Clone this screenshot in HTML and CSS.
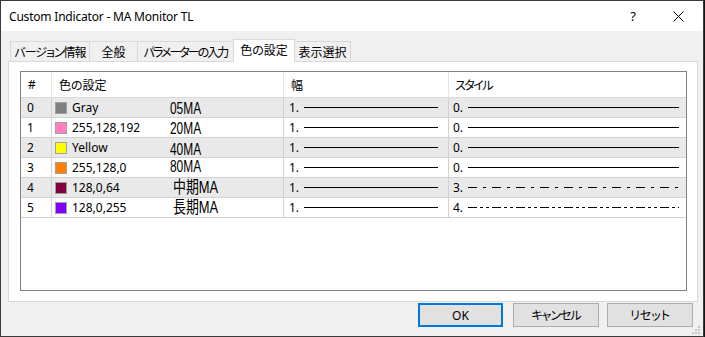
FILE: index.html
```html
<!DOCTYPE html>
<html lang="ja">
<head>
    <meta charset="UTF-8">
    <title>Custom Indicator - MA Monitor TL</title>
    <link rel="stylesheet" href="styles.css">
</head>
<body>
    <div class="window">
        <div class="titlebar">
            <span class="title">Custom Indicator - MA Monitor TL</span>
            <span class="help">?</span>
            <svg class="close" viewBox="0 0 11 11">
                <path d="M0.5 0.5 L10.5 10.5 M10.5 0.5 L0.5 10.5" stroke="#000" stroke-width="1" fill="none"/>
            </svg>
        </div>

        <div class="client">
            <div class="tabs">
                <div class="tab t1">バージョン情報</div>
                <div class="tab t2">全般</div>
                <div class="tab t3">パラメーターの入力</div>
                <div class="tab t4 active">色の設定</div>
                <div class="tab t5">表示選択</div>
            </div>

            <div class="panel">
                <div class="list">
                    <div class="row head">
                        <div class="cell num">#</div>
                        <div class="cell color">色の設定</div>
                        <div class="cell width">幅</div>
                        <div class="cell style"><span class="kana">スタイル</span></div>
                    </div>

                    <div class="row alt">
                        <div class="cell num">0</div>
                        <div class="cell color"><span class="swatch gray"></span>Gray<span class="tag">05MA</span></div>
                        <div class="cell width">1.<span class="line"></span></div>
                        <div class="cell style">0.<span class="line"></span></div>
                    </div>
                    <div class="row">
                        <div class="cell num">1</div>
                        <div class="cell color"><span class="swatch pink"></span>255,128,192<span class="tag">20MA</span></div>
                        <div class="cell width">1.<span class="line"></span></div>
                        <div class="cell style">0.<span class="line"></span></div>
                    </div>
                    <div class="row alt">
                        <div class="cell num">2</div>
                        <div class="cell color"><span class="swatch yellow"></span>Yellow<span class="tag low">40MA</span></div>
                        <div class="cell width">1.<span class="line"></span></div>
                        <div class="cell style">0.<span class="line"></span></div>
                    </div>
                    <div class="row">
                        <div class="cell num">3</div>
                        <div class="cell color"><span class="swatch orange"></span>255,128,0<span class="tag high">80MA</span></div>
                        <div class="cell width">1.<span class="line"></span></div>
                        <div class="cell style">0.<span class="line"></span></div>
                    </div>
                    <div class="row alt">
                        <div class="cell num">4</div>
                        <div class="cell color"><span class="swatch maroon"></span>128,0,64<span class="tag kanji">中期MA</span></div>
                        <div class="cell width">1.<span class="line"></span></div>
                        <div class="cell style">3.<span class="line dashdot"></span></div>
                    </div>
                    <div class="row">
                        <div class="cell num">5</div>
                        <div class="cell color"><span class="swatch violet"></span>128,0,255<span class="tag kanji">長期MA</span></div>
                        <div class="cell width">1.<span class="line"></span></div>
                        <div class="cell style">4.<span class="line dashdotdot"></span></div>
                    </div>
                </div>
            </div>

            <div class="buttons">
                <button class="btn ok">OK</button>
                <button class="btn cancel">キャンセル</button>
                <button class="btn reset">リセット</button>
            </div>

            <svg class="grip" viewBox="0 0 8 8">
                <rect x="6" y="0" width="2" height="2" fill="#c4c4c4"/>
                <rect x="3" y="3" width="2" height="2" fill="#c4c4c4"/>
                <rect x="6" y="3" width="2" height="2" fill="#c4c4c4"/>
                <rect x="0" y="6" width="2" height="2" fill="#c4c4c4"/>
                <rect x="3" y="6" width="2" height="2" fill="#c4c4c4"/>
                <rect x="6" y="6" width="2" height="2" fill="#c4c4c4"/>
            </svg>
        </div>
    </div>
</body>
</html>
```

FILE: styles.css
```css
* {
    margin: 0;
    padding: 0;
    box-sizing: border-box;
}

body {
    width: 705px;
    height: 337px;
    overflow: hidden;
    background: #161616;
    font-family: 'Noto Sans', 'Noto Sans CJK JP', sans-serif;
    font-size: 12px;
    font-feature-settings: "palt";
    color: #000;
}

.window {
    width: 704px;
    height: 337px;
    border: 1px solid #3a3a3a;
    background: #f0f0f0;
    display: flex;
    flex-direction: column;
}

/* title bar */
.titlebar {
    height: 30px;
    background: #fff;
    display: flex;
    align-items: center;
    padding-left: 8px;
}

.title {
    flex: 1;
    letter-spacing: -0.2px;
}

.help {
    font-size: 13px;
    margin-right: 37px;
}

.close {
    width: 11px;
    height: 11px;
    margin-right: 19px;
}

/* client area */
.client {
    flex: 1;
    position: relative;
    padding: 8px 0 0 7px;
}

.tabs {
    display: flex;
    align-items: flex-end;
    height: 22px;
    margin-left: 2px;
}

.tab {
    height: 20px;
    border: 1px solid #d9d9d9;
    border-bottom: none;
    margin-left: -1px;
    background: #f0f0f0;
    display: flex;
    align-items: center;
    justify-content: center;
    white-space: nowrap;
}

.tab.t1 { width: 80px; margin-left: 0; letter-spacing: -1px; }
.tab.t2 { width: 49px; }
.tab.t3 { width: 97px; letter-spacing: -2px; }
.tab.t4 { width: 62px; }
.tab.t5 { width: 57px; }

.tab.active {
    height: 23px;
    background: #fff;
    margin-bottom: -1px;
    position: relative;
    z-index: 1;
    padding-bottom: 2px;
}

.panel {
    width: 690px;
    height: 241px;
    border: 1px solid #d9d9d9;
    background: #fff;
    padding: 9px 10px 10px 11px;
}

/* list view */
.list {
    height: 220px;
    border: 1px solid #828282;
    background: #fff;
}

.row {
    display: grid;
    grid-template-columns: 31px 232px 165px 237px;
    height: 20px;
    border-bottom: 1px solid #d2d2d2;
}

.row.alt {
    background: #e9e9e9;
}

.row.head {
    height: 26px;
    border-bottom: 1px solid #dadada;
    background: #fff;
}

.cell {
    display: flex;
    align-items: center;
    position: relative;
    border-right: 1px solid #d2d2d2;
    white-space: nowrap;
}

.row.head .cell {
    border-right-color: #e5e5e5;
}

.cell.num { padding-left: 6px; }
.cell.color { padding-left: 3px; }
.cell.width { padding-left: 5px; }
.cell.style { padding-left: 4px; border-right: none; }

.row.head .cell.num { padding-left: 7px; }
.row.head .cell.color { padding-left: 7px; }
.row.head .cell.width { padding-left: 7px; }
.row.head .cell.style { padding-left: 6px; }

.kana {
    letter-spacing: -1.5px;
}

.swatch {
    width: 12px;
    height: 12px;
    border: 1px solid #a0a0a0;
    margin-right: 5px;
}

.swatch.gray { background: #808080; }
.swatch.pink { background: #ff80c0; }
.swatch.yellow { background: #ffff00; }
.swatch.orange { background: #ff8000; }
.swatch.maroon { background: #800040; }
.swatch.violet { background: #8000ff; }

/* names drawn over the colour column */
.tag {
    position: absolute;
    left: 118px;
    top: 4px;
    font-family: 'Liberation Sans', sans-serif;
    font-size: 17px;
    line-height: 14px;
    transform: scaleX(0.7);
    transform-origin: left top;
    font-feature-settings: normal;
}

.tag.low { top: 5px; }
.tag.high { top: 2px; }

.tag.kanji {
    left: 121px;
    top: 3px;
    font-family: 'Liberation Sans', 'Noto Sans CJK JP', sans-serif;
    transform: scaleX(0.76);
}

.line {
    flex: 1;
    height: 1px;
    background: #000;
    margin: 0 10px 0 5px;
}

.cell.style .line {
    margin-right: 7px;
}

.line.dashdot {
    background: repeating-linear-gradient(to right, #000 0 9px, transparent 9px 15px, #000 15px 18px, transparent 18px 24px);
}

.line.dashdotdot {
    background: repeating-linear-gradient(to right, #000 0 9px, transparent 9px 12px, #000 12px 15px, transparent 15px 18px, #000 18px 21px, transparent 21px 24px);
}

/* dialog buttons */
.buttons {
    display: flex;
    justify-content: flex-end;
    width: 690px;
    margin-top: 1px;
    padding-right: 5px;
}

.btn {
    height: 24px;
    background: #e1e1e1;
    border: 1px solid #adadad;
    font-family: 'Noto Sans', 'Noto Sans CJK JP', sans-serif;
    font-size: 12px;
    font-feature-settings: "palt";
    color: #000;
}

.btn.ok {
    width: 85px;
    border: 2px solid #0078d7;
}

.btn.cancel {
    width: 86px;
    margin-left: 10px;
    letter-spacing: -1px;
}

.btn.reset {
    width: 86px;
    margin-left: 8px;
}

.grip {
    position: absolute;
    right: 3px;
    bottom: 2px;
    width: 8px;
    height: 8px;
}
```
